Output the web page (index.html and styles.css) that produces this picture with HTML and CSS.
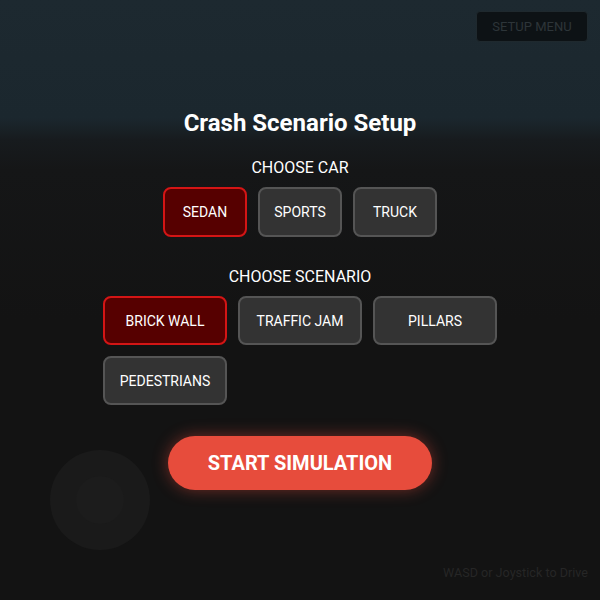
FILE: index.html
```html
<!DOCTYPE html>
<html lang="en">
<head>
<meta charset="utf-8">
<title>Crash Scenario Setup</title>
<link rel="stylesheet" href="styles.css">
</head>
<body>
<div class="scene">
  <button class="setup-menu">SETUP MENU</button>
  <div class="joystick"><div class="joystick-knob"></div></div>
  <div class="hint">WASD or Joystick to Drive</div>

  <main class="panel">
    <h1 class="title">Crash Scenario Setup</h1>
    <div class="label">CHOOSE CAR</div>
    <div class="options cars">
      <button class="opt car selected">SEDAN</button>
      <button class="opt car">SPORTS</button>
      <button class="opt car">TRUCK</button>
    </div>
    <div class="label label-scenario">CHOOSE SCENARIO</div>
    <div class="options scenarios">
      <button class="opt scen selected">BRICK WALL</button>
      <button class="opt scen">TRAFFIC JAM</button>
      <button class="opt scen">PILLARS</button>
      <button class="opt scen">PEDESTRIANS</button>
    </div>
    <button class="start">START SIMULATION</button>
  </main>
</div>
</body>
</html>
```

FILE: styles.css
```css
* { box-sizing: border-box; }
html, body {
  margin: 0;
  padding: 0;
  width: 600px;
  height: 600px;
  overflow: hidden;
}
body {
  font-family: Roboto, "Liberation Sans", Arial, sans-serif;
  background: #131313;
  color: #fff;
}
.scene {
  position: relative;
  width: 600px;
  height: 600px;
  background: linear-gradient(to bottom, #1d2930 0px, #1b272e 118px, #171b1e 140px, #151617 170px, #131313 320px, #131313 600px);
}
.setup-menu {
  position: absolute;
  top: 11px;
  right: 12px;
  width: 112px;
  height: 31px;
  background: #0d1215;
  border: 1px solid #1f292e;
  border-radius: 4px;
  color: #2d3539;
  font-family: Roboto, "Liberation Sans", sans-serif;
  font-size: 13px;
  padding: 0;
  letter-spacing: 0;
}
.joystick {
  position: absolute;
  left: 50px;
  top: 450px;
  width: 100px;
  height: 100px;
  border-radius: 50%;
  background: #1a1a1a;
  display: flex;
  align-items: center;
  justify-content: center;
}
.joystick-knob {
  width: 48px;
  height: 48px;
  border-radius: 50%;
  background: #1c1c1c;
}
.hint {
  position: absolute;
  right: 12px;
  top: 565px;
  font-size: 12.6px;
  line-height: 16px;
  color: #262626;
}
.panel {
  display: flex;
  flex-direction: column;
  align-items: center;
  padding-top: 109px;
}
.title {
  margin: 0;
  font-size: 24px;
  line-height: 28px;
  font-weight: 700;
  color: #fff;
}
.label {
  margin-top: 21px;
  font-size: 16px;
  line-height: 19px;
  color: #fff;
}
.label-scenario {
  margin-top: 30px;
}
.options {
  display: flex;
  flex-wrap: wrap;
  gap: 11px;
  margin-top: 10px;
}
.cars { width: 274px; }
.scenarios { width: 394px; margin-top: 10px; }
.opt {
  height: 50px;
  border: 2px solid #555;
  background: #333;
  border-radius: 8px;
  color: #fff;
  font-family: Roboto, "Liberation Sans", sans-serif;
  font-size: 14px;
  padding: 0;
}
.opt.car { width: 84px; }
.opt.scen { width: 124px; height: 49px; }
.opt.selected {
  background: #560000;
  border-color: #d41515;
}
.start {
  margin-top: 31px;
  width: 264px;
  height: 54px;
  border: none;
  border-radius: 27px;
  background: #e74c3c;
  color: #fff;
  font-family: Roboto, "Liberation Sans", sans-serif;
  font-size: 20px;
  font-weight: 700;
  box-shadow: 0 0 16px rgba(231, 76, 60, 0.45);
  padding: 0;
}
```
